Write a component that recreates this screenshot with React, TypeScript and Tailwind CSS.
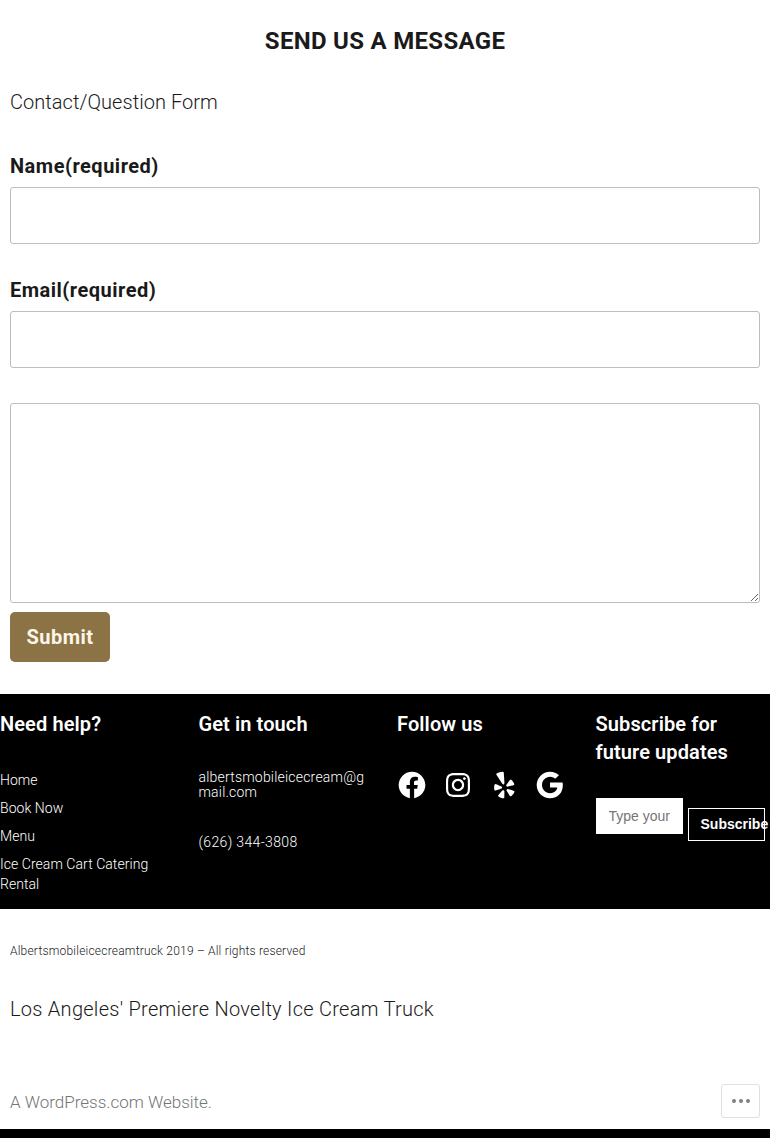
const Fb = () => (
  <svg viewBox="0 0 24 24" className="w-8 h-8 fill-white"><path d="M12 2C6.5 2 2 6.5 2 12c0 5 3.7 9.1 8.4 9.9v-7H7.9V12h2.5V9.8c0-2.5 1.5-3.9 3.8-3.9 1.1 0 2.2.2 2.2.2v2.5h-1.3c-1.2 0-1.6.8-1.6 1.6V12h2.8l-.4 2.9h-2.3v7C18.3 21.1 22 17 22 12c0-5.5-4.5-10-10-10z" /></svg>
);
const Ig = () => (
  <svg viewBox="0 0 24 24" className="w-8 h-8 fill-white"><path d="M12,4.622c2.403,0,2.688,0.009,3.637,0.052c0.877,0.04,1.354,0.187,1.671,0.31c0.42,0.163,0.72,0.358,1.035,0.673 c0.315,0.315,0.51,0.615,0.673,1.035c0.123,0.317,0.27,0.794,0.31,1.671c0.043,0.949,0.052,1.234,0.052,3.637 s-0.009,2.688-0.052,3.637c-0.04,0.877-0.187,1.354-0.31,1.671c-0.163,0.42-0.358,0.72-0.673,1.035 c-0.315,0.315-0.615,0.51-1.035,0.673c-0.317,0.123-0.794,0.27-1.671,0.31c-0.949,0.043-1.234,0.052-3.637,0.052 s-2.688-0.009-3.637-0.052c-0.877-0.04-1.354-0.187-1.671-0.31c-0.42-0.163-0.72-0.358-1.035-0.673 c-0.315-0.315-0.51-0.615-0.673-1.035c-0.123-0.317-0.27-0.794-0.31-1.671C4.631,14.688,4.622,14.403,4.622,12 s0.009-2.688,0.052-3.637c0.04-0.877,0.187-1.354,0.31-1.671c0.163-0.42,0.358-0.72,0.673-1.035 c0.315-0.315,0.615-0.51,1.035-0.673c0.317-0.123,0.794-0.27,1.671-0.31C9.312,4.631,9.597,4.622,12,4.622 M12,3 C9.556,3,9.249,3.01,8.289,3.054C7.331,3.098,6.677,3.25,6.105,3.472C5.513,3.702,5.011,4.01,4.511,4.511 c-0.5,0.5-0.808,1.002-1.038,1.594C3.25,6.677,3.098,7.331,3.054,8.289C3.01,9.249,3,9.556,3,12c0,2.444,0.01,2.751,0.054,3.711 c0.044,0.958,0.196,1.612,0.418,2.185c0.23,0.592,0.538,1.094,1.038,1.594c0.5,0.5,1.002,0.808,1.594,1.038 c0.572,0.222,1.227,0.375,2.185,0.418C9.249,20.99,9.556,21,12,21s2.751-0.01,3.711-0.054c0.958-0.044,1.612-0.196,2.185-0.418 c0.592-0.23,1.094-0.538,1.594-1.038c0.5-0.5,0.808-1.002,1.038-1.594c0.222-0.572,0.375-1.227,0.418-2.185 C20.99,14.751,21,14.444,21,12s-0.01-2.751-0.054-3.711c-0.044-0.958-0.196-1.612-0.418-2.185c-0.23-0.592-0.538-1.094-1.038-1.594 c-0.5-0.5-1.002-0.808-1.594-1.038c-0.572-0.222-1.227-0.375-2.185-0.418C14.751,3.01,14.444,3,12,3L12,3z M12,7.378 c-2.552,0-4.622,2.069-4.622,4.622S9.448,16.622,12,16.622s4.622-2.069,4.622-4.622S14.552,7.378,12,7.378z M12,15 c-1.657,0-3-1.343-3-3s1.343-3,3-3s3,1.343,3,3S13.657,15,12,15z M16.804,6.116c-0.596,0-1.08,0.484-1.08,1.08 s0.484,1.08,1.08,1.08c0.596,0,1.08-0.484,1.08-1.08S17.401,6.116,16.804,6.116z" /></svg>
);
const Yelp = () => (
  <svg viewBox="0 0 24 24" className="w-8 h-8 fill-white"><path d="M12.271,16.718v1.417q-.011,3.257-.067,3.4a.707.707,0,0,1-.569.446,4.637,4.637,0,0,1-2.024-.424A4.609,4.609,0,0,1,7.8,20.565a.844.844,0,0,1-.19-.4.692.692,0,0,1,.044-.29,3.181,3.181,0,0,1,.379-.524q.335-.412,2.019-2.409.011,0,.669-.781a.757.757,0,0,1,.44-.274.965.965,0,0,1,.552.039.945.945,0,0,1,.418.324.732.732,0,0,1,.139.468Zm-1.662-2.8a.783.783,0,0,1-.58.781l-1.339.435q-3.067.981-3.257.981a.711.711,0,0,1-.6-.4,2.636,2.636,0,0,1-.19-.836,9.134,9.134,0,0,1,.011-1.857,3.559,3.559,0,0,1,.335-1.389.659.659,0,0,1,.625-.357,22.629,22.629,0,0,1,2.253.859q.781.324,1.283.524l.937.379a.771.771,0,0,1,.4.34A.982.982,0,0,1,10.609,13.917Zm9.213,3.313a4.467,4.467,0,0,1-1.021,1.8,4.559,4.559,0,0,1-1.512,1.417.671.671,0,0,1-.7-.078q-.156-.112-2.052-3.2l-.524-.859a.761.761,0,0,1-.128-.513.957.957,0,0,1,.217-.513.774.774,0,0,1,.926-.29q.011.011,1.327.446,2.264.736,2.7.887a2.082,2.082,0,0,1,.524.229.673.673,0,0,1,.245.68Zm-7.5-7.049q.056,1.137-.6,1.361-.647.19-1.272-.792L6.237,4.08a.7.7,0,0,1,.212-.691,5.788,5.788,0,0,1,2.314-1,5.928,5.928,0,0,1,2.5-.352.681.681,0,0,1,.547.5q.034.2.245,3.407T12.327,10.181Zm7.384,1.2a.679.679,0,0,1-.29.658q-.167.112-3.67.959-.747.167-1.015.257l.011-.022a.769.769,0,0,1-.513-.044.914.914,0,0,1-.413-.357.786.786,0,0,1,0-.971q.011-.011.836-1.137,1.394-1.908,1.673-2.275a2.423,2.423,0,0,1,.379-.435A.7.7,0,0,1,17.435,8a4.482,4.482,0,0,1,1.372,1.489,4.81,4.81,0,0,1,.9,1.868v.034Z" /></svg>
);
const Google = () => (
  <svg viewBox="0 0 24 24" className="w-8 h-8 fill-white"><path d="M12.02,10.18v3.72v0.01h5.51c-0.26,1.57-1.67,4.22-5.5,4.22c-3.31,0-6.01-2.75-6.01-6.12s2.7-6.12,6.01-6.12 c1.87,0,3.13,0.8,3.85,1.48l2.84-2.76C16.99,2.99,14.73,2,12.03,2c-5.52,0-10,4.48-10,10s4.48,10,10,10c5.77,0,9.6-4.06,9.6-9.77 c0-0.83-0.11-1.42-0.25-2.05H12.02z" /></svg>
);

function Label({ children, className }: { children: string; className: string }) {
  return <label className={`block text-[20px] leading-[24px] font-bold tracking-[0.5px] text-[#1a1a1a] ${className}`}>{children}</label>;
}

function FooterTitle({ children }: { children: string }) {
  return <h3 className="text-[20px] leading-[28px] font-semibold tracking-[0.1px]">{children}</h3>;
}

export default function App() {
  return (
    <div className="w-[770px] h-[1138px] overflow-hidden bg-white flex flex-col font-['Roboto',sans-serif] text-[#1a1a1a]">
      <section className="px-[10px] h-[694px] flex flex-col">
        <h2 className="mt-[25px] text-center text-[24px] leading-[32px] font-bold tracking-[0.3px]">SEND US A MESSAGE</h2>
        <p className="mt-[33px] text-[20px] leading-[24px] font-light tracking-[0.05px]">Contact/Question Form</p>
        <Label className="mt-[40px]">Name(required)</Label>
        <input className="mt-[9px] block w-full h-[57px] border border-[#bdbdbd] rounded-[3px] bg-white" />
        <Label className="mt-[34px]">Email(required)</Label>
        <input className="mt-[9px] block w-full h-[57px] border border-[#bdbdbd] rounded-[3px] bg-white" />
        <textarea className="mt-[35px] block w-full h-[200px] border border-[#bdbdbd] rounded-[3px] bg-white resize-y" />
        <button className="mt-[9px] w-[100px] h-[50px] rounded-[5px] bg-[#8b7345] text-[#fdf6e8] text-[20px] font-bold tracking-[0.5px] text-center">Submit</button>
      </section>

      <footer className="h-[215px] bg-black text-white grid grid-cols-4 gap-x-6 pt-[16px]">
        <div>
          <FooterTitle>Need help?</FooterTitle>
          <ul className="mt-[32px] text-[14px] font-light leading-[20px] tracking-[0.05px] flex flex-col gap-y-[8px]">
            <li>Home</li>
            <li>Book Now</li>
            <li>Menu</li>
            <li>Ice Cream Cart Catering Rental</li>
          </ul>
        </div>
        <div>
          <FooterTitle>Get in touch</FooterTitle>
          <p className="mt-[32px] text-[14px] leading-[15px] font-light tracking-[0.2px] break-all">albertsmobileicecream@gmail.com</p>
          <p className="mt-[32px] text-[14px] leading-[20px] font-light tracking-[0.35px]">(626) 344-3808</p>
        </div>
        <div>
          <FooterTitle>Follow us</FooterTitle>
          <div className="mt-[31px] -ml-[1px] flex gap-x-[14px]">
            <Fb />
            <Ig />
            <Yelp />
            <Google />
          </div>
        </div>
        <div>
          <FooterTitle>Subscribe for future updates</FooterTitle>
          <div className="mt-[32px] flex items-start gap-x-[5px]">
            <input placeholder="Type your email" className="w-[87px] h-[36px] bg-white px-[13px] text-[14px] font-['Liberation_Sans',sans-serif] text-black placeholder:text-[#757575]" />
            <button className="mt-[10px] w-[77px] h-[33px] shrink-0 border border-white pl-[12px] text-left text-[14px] font-bold font-['Liberation_Sans',sans-serif] whitespace-nowrap">Subscribe</button>
          </div>
        </div>
      </footer>

      <div className="flex-1 px-[10px] flex flex-col">
        <p className="mt-[34px] text-[12px] leading-[16px] font-light tracking-[0.2px]">Albertsmobileicecreamtruck 2019 – All rights reserved</p>
        <p className="mt-[36px] text-[20px] leading-[28px] font-light tracking-[0.27px]">Los Angeles' Premiere Novelty Ice Cream Truck</p>
        <div className="mt-[61px] flex items-start justify-between">
          <a className="mt-[5px] text-[17px] leading-[26px] font-light text-[#757575]">A WordPress.com Website.</a>
          <button className="w-[39px] h-[34px] border border-[#e0e0e0] rounded-[3px] flex items-center justify-center gap-x-[3px] bg-white">
            <span className="w-[4px] h-[4px] rounded-full bg-[#808080]" />
            <span className="w-[4px] h-[4px] rounded-full bg-[#808080]" />
            <span className="w-[4px] h-[4px] rounded-full bg-[#808080]" />
          </button>
        </div>
      </div>
      <div className="h-[9px] bg-black" />
    </div>
  );
}
